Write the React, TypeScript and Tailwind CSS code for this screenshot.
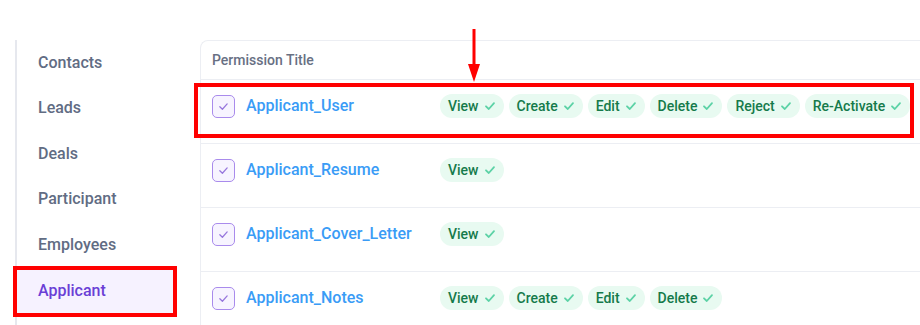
const navItems = ['Contacts', 'Leads', 'Deals', 'Participant', 'Employees', 'Applicant'];

const rows = [
  { title: 'Applicant_User', perms: ['View', 'Create', 'Edit', 'Delete', 'Reject', 'Re-Activate'] },
  { title: 'Applicant_Resume', perms: ['View'] },
  { title: 'Applicant_Cover_Letter', perms: ['View'] },
  { title: 'Applicant_Notes', perms: ['View', 'Create', 'Edit', 'Delete'] },
];

const Tick = ({ size, color, width }: { size: number; color: string; width: number }) => (
  <svg width={size} height={size} viewBox="0 0 12 12" fill="none" stroke={color} strokeWidth={width} strokeLinecap="round" strokeLinejoin="round">
    <path d="M2 6.3 4.8 9 10 3.2" />
  </svg>
);

const PermChip = ({ label }: { label: string }) => (
  <span className="flex h-6 shrink-0 items-center gap-[5px] whitespace-nowrap rounded-full bg-[#e8faf1] px-2 text-[14px] font-medium text-[#157a4b]">
    {label}
    <Tick size={12} color="#5cd2a6" width={1.8} />
  </span>
);

const Checkbox = () => (
  <span className="flex h-[23px] w-[23px] shrink-0 items-center justify-center rounded-[5px] border-[1.5px] border-[#a98bec] bg-[#f7f4ff]">
    <Tick size={11} color="#9777dd" width={1.4} />
  </span>
);

export default function App() {
  return (
    <div className="relative flex h-[325px] w-[920px] overflow-hidden bg-white pt-10 font-['Roboto',sans-serif]">
      {/* sidebar */}
      <aside className="ml-[15px] w-[158px] shrink-0 border-l-2 border-[#e6e8ee]">
        {navItems.map((item) => {
          const active = item === 'Applicant';
          return (
            <div
              key={item}
              className={
                active
                  ? 'mt-[2px] flex h-[43.5px] items-center bg-[#f6f2ff] pl-[21px] text-[16px] font-medium text-[#6a3fd6] outline-4 outline-[#ff0000]'
                  : 'flex h-[45.5px] items-center pl-[21px] text-[16px] font-medium text-[#616c83]'
              }
            >
              {item}
            </div>
          );
        })}
      </aside>

      {/* permissions table */}
      <section className="ml-[27px] flex-1 rounded-tl-lg border-l border-t border-[#eceef3]">
        <div className="flex h-[39px] items-center border-b border-[#eceef3] pl-[11px] text-[14px] font-medium text-[#687083]">
          Permission Title
        </div>
        {rows.map((row) => (
          <div key={row.title} className="h-16 border-b border-[#eceef3] pt-[14px]">
            <div className="flex h-6 items-center pl-[11px]">
              <div className="flex w-[228px] shrink-0 items-center gap-[11px]">
                <Checkbox />
                <span className="text-[16px] font-medium text-[#3a9cf6]">{row.title}</span>
              </div>
              <div className="flex gap-[5px]">
                {row.perms.map((p) => (
                  <PermChip key={p} label={p} />
                ))}
              </div>
            </div>
          </div>
        ))}
      </section>

      {/* annotations */}
      <div className="absolute left-[194px] top-[83px] h-[55px] w-[720px] border-4 border-[#ff0000]" />
      <svg className="absolute left-[466px] top-[28px]" width="16" height="56" viewBox="0 0 16 56">
        <rect x="6.5" y="1" width="3" height="38" fill="#ff0000" />
        <polygon points="2,36 14,36 8,54" fill="#ff0000" />
      </svg>
    </div>
  );
}
